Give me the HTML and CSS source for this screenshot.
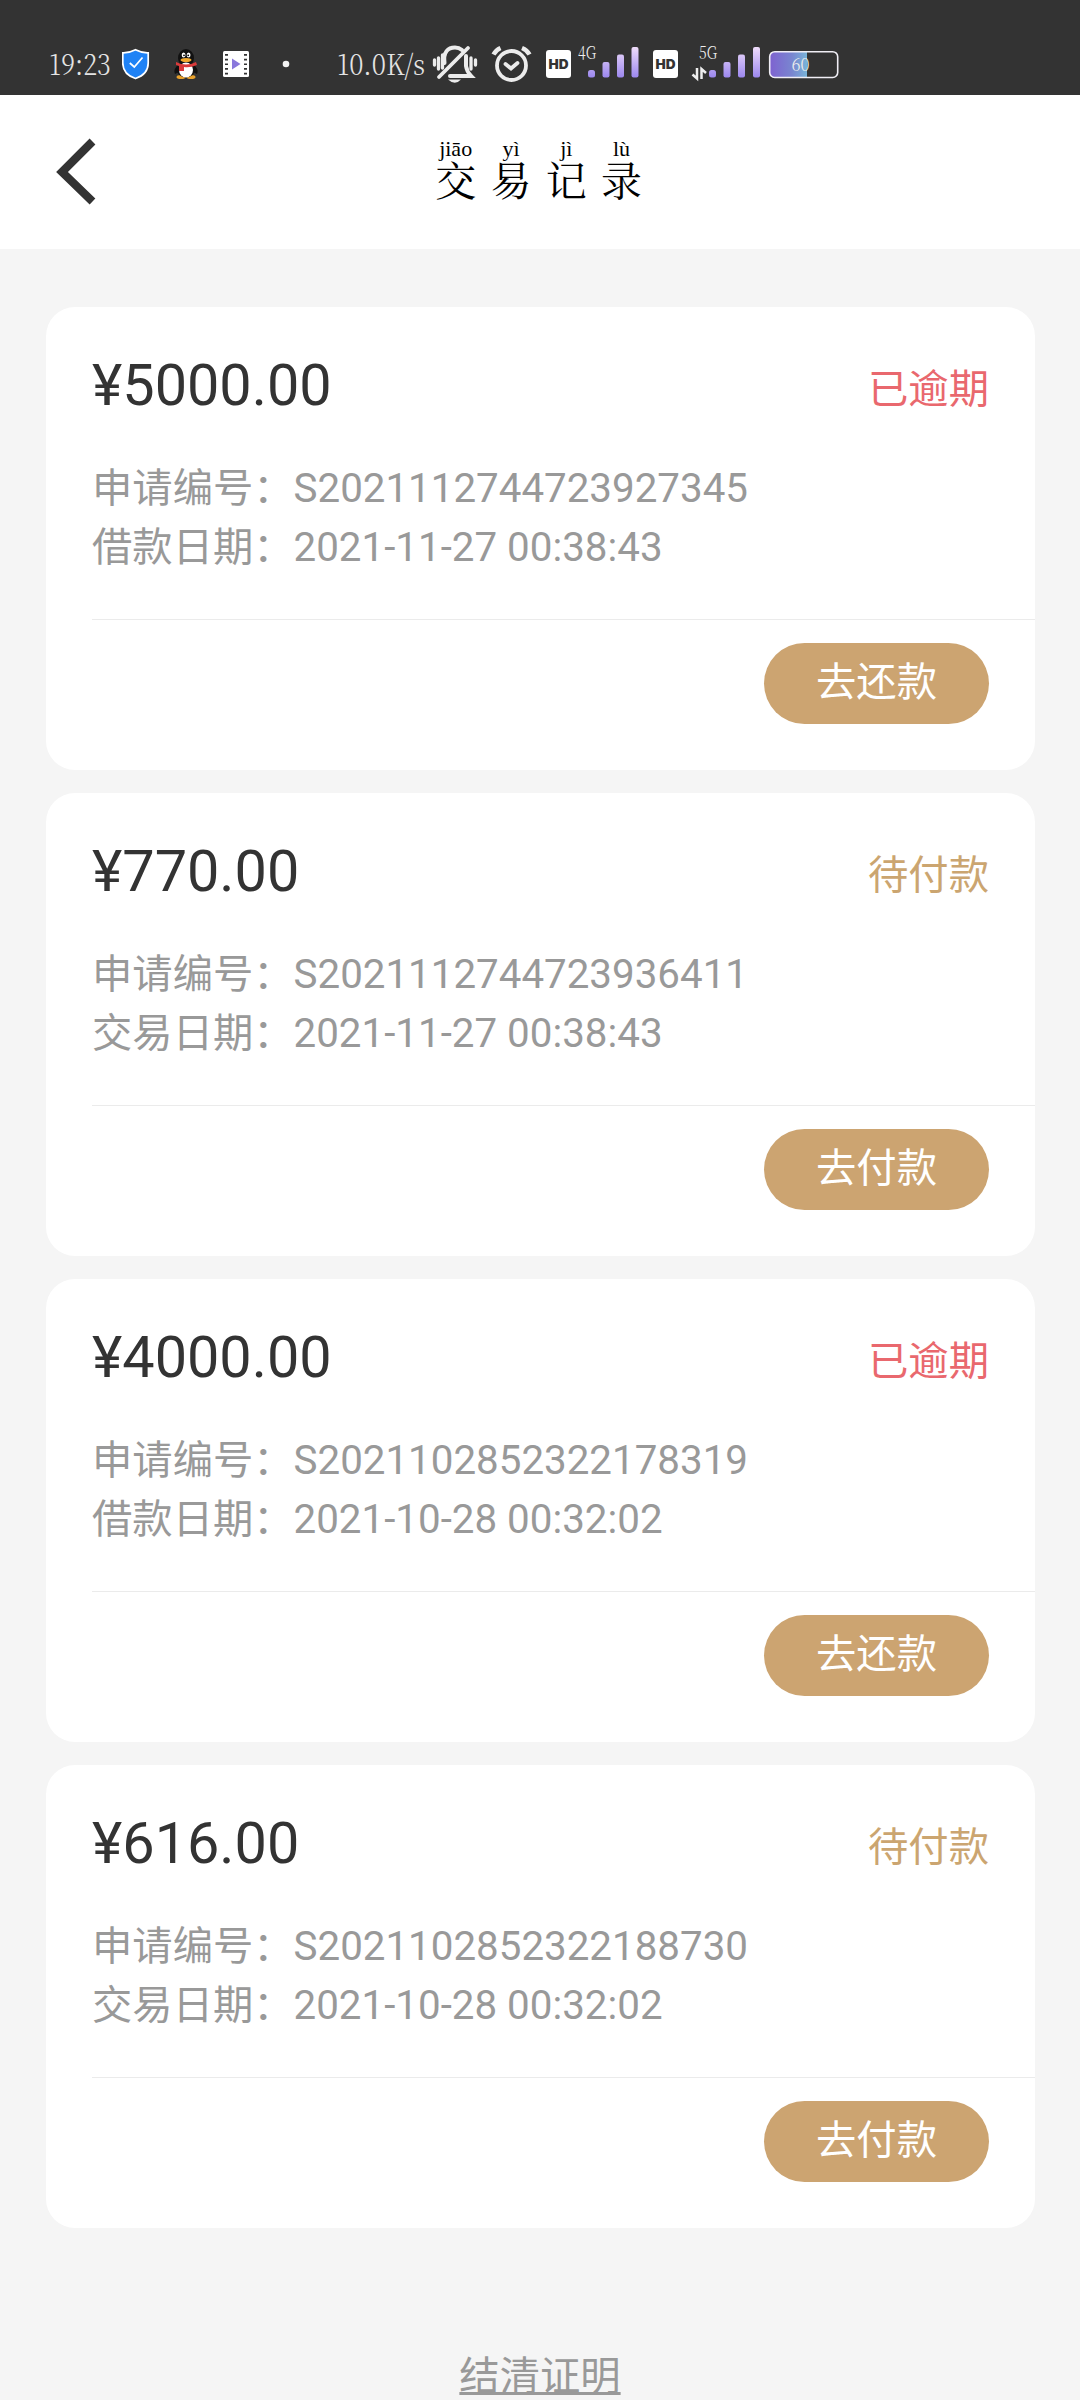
FILE: index.html
```html
<!DOCTYPE html>
<html lang="zh-CN">
<head>
<meta charset="utf-8">
<title>交易记录</title>
<link rel="stylesheet" href="styles.css">
</head>
<body>
<div class="status-bar">
  <svg width="72" height="50" viewBox="50 40 72 50"><text class="status-text" x="49" y="75" textLength="62" lengthAdjust="spacingAndGlyphs">19:23</text></svg>
  <svg width="40" height="50" viewBox="122 40 40 50"><path d="M135.500 49.800Q141.500 53 148.200 52.800V63C148.200 71 143 76 135.500 78.500C128 76 122.800 71 122.800 63V52.800Q129.500 53 135.500 49.800Z" fill="#1f82f5" stroke="#fff" stroke-width="1.700"/><path d="M129.800 63L134.300 67L142.500 57.500" fill="none" stroke="#fff" stroke-width="1.700"/></svg>
  <svg width="50" height="50" viewBox="162 40 50 50"><ellipse cx="181" cy="77" rx="4.500" ry="2" fill="#e9a22c"/><ellipse cx="191" cy="77" rx="4.500" ry="2" fill="#e9a22c"/><path d="M177 66Q173 70 175 74L179 72M195 66Q199 70 197 74L193 72" fill="#111"/><ellipse cx="186" cy="58" rx="8" ry="9" fill="#111"/><ellipse cx="186" cy="69" rx="9.500" ry="8.500" fill="#111"/><ellipse cx="186" cy="70" rx="7" ry="7.500" fill="#fff"/><ellipse cx="183.600" cy="55" rx="1.900" ry="2.600" fill="#fff"/><ellipse cx="188.600" cy="55" rx="1.900" ry="2.600" fill="#fff"/><circle cx="184" cy="55.300" r=".9"/><circle cx="188.200" cy="55.300" r=".9"/><ellipse cx="186" cy="60" rx="5.500" ry="2" fill="#f2a92d"/><path d="M176 62Q186 67 196 62L197 65Q190 68 184 67V71H179V66L176 65Z" fill="#d93a3a"/></svg>
  <svg width="50" height="50" viewBox="212 40 50 50"><rect x="223" y="51" width="26" height="26" rx="1.500" fill="#fff"/><path d="M226.500 54V77M245.500 54V77" stroke="#333" stroke-width="3" stroke-dasharray="1.700 3"/><path d="M232 58.500V69.500L240.500 64Z" fill="#8a78dc"/></svg>
  <svg width="75" height="50" viewBox="262 40 75 50"><circle cx="286" cy="64" r="3.300" fill="#f3f3f3"/></svg>
  <svg width="93" height="50" viewBox="337 40 93 50"><text class="status-text" x="337" y="74.500" textLength="88" lengthAdjust="spacingAndGlyphs">10.0K/s</text></svg>
  <svg width="57" height="50" viewBox="430 40 57 50"><g fill="none" stroke="#ececec" stroke-width="3.300" stroke-linecap="round"><path d="M434.500 60V65M438.500 58V69M475.500 60V65M471 58V69M442.500 55V68"/><path d="M444.500 63C443 52 448 47.500 455 47.500Q459 47.500 462 50M466 56V66Q467 72 471 76H450" stroke-width="4"/><path d="M439 77L468 48" stroke-width="3.800"/></g><path d="M448 79.500H461Q455 86 448 79.500Z" fill="#ececec"/></svg>
  <svg width="53" height="50" viewBox="487 40 53 50"><g fill="none" stroke="#ececec" stroke-linecap="round"><circle cx="511.500" cy="65.500" r="14.500" stroke-width="3.800"/><path d="M505.500 64L511 68.500L517.500 63" stroke-width="3.800"/><path d="M493.500 54.500Q496 50 500.500 48M522 48Q527 50 529.500 54.500" stroke-width="4.500" stroke-linecap="butt"/></g></svg>
  <svg width="35" height="50" viewBox="540 40 35 50"><rect x="546" y="50" width="25" height="28" rx="3" fill="#fff"/><text class="hd" x="548.500" y="69" textLength="20" lengthAdjust="spacingAndGlyphs">HD</text></svg>
  <svg width="73" height="50" viewBox="575 40 73 50"><defs><linearGradient id="bar" x1="0" y1="47" x2="0" y2="78" gradientUnits="userSpaceOnUse"><stop stop-color="#efdcfa"/><stop offset="1" stop-color="#9a86ee"/></linearGradient></defs><text class="net" x="578" y="59" textLength="18" lengthAdjust="spacingAndGlyphs">4G</text><g fill="url(#bar)"><rect x="588" y="70" width="7" height="7.500" rx="2.500"/><rect x="602.500" y="62" width="7" height="15.500" rx="2"/><rect x="617" y="54.500" width="7" height="23" rx="2"/><rect x="631.500" y="47" width="7" height="30.500" rx="2"/></g></svg>
  <svg width="34" height="50" viewBox="648 40 34 50"><rect x="653" y="50" width="25" height="28" rx="3" fill="#fff"/><text class="hd" x="655.500" y="69" textLength="20" lengthAdjust="spacingAndGlyphs">HD</text></svg>
  <svg width="84" height="50" viewBox="682 40 84 50"><text class="net" x="699" y="59" textLength="18" lengthAdjust="spacingAndGlyphs">5G</text><path d="M697 68V78.500L692.500 74.500M701.500 79V69L706 73" fill="none" stroke="#eee" stroke-width="2.500"/><g fill="url(#bar)"><rect x="709" y="70" width="7" height="7.500" rx="2.500"/><rect x="723.500" y="62" width="7" height="15.500" rx="2"/><rect x="738" y="54.500" width="7" height="23" rx="2"/><rect x="753" y="47" width="7" height="30.500" rx="2"/></g></svg>
  <svg width="80" height="50" viewBox="766 40 80 50"><defs><linearGradient id="charge"><stop stop-color="#7e62d0"/><stop offset=".6" stop-color="#7986d0"/><stop offset="1" stop-color="#78b4d8"/></linearGradient></defs><path d="M774 52H807V77.500H774Q770 77.500 770 73V56Q770 52 774 52Z" fill="url(#charge)"/><rect x="769.700" y="51.700" width="68" height="25.800" rx="5" fill="none" stroke="#f0eef5" stroke-width="1.600"/><text class="net" x="791.500" y="71" textLength="18" lengthAdjust="spacingAndGlyphs">60</text></svg>
</div>
<header class="header">
  <svg class="back" width="50" height="80" viewBox="50 131 50 80"><path d="M92.500 141.500L62 172L92.500 201.500" fill="none" stroke="#333" stroke-width="8.200"/></svg>
  <h1 class="title">
    <span class="syllable"><span class="pinyin">jiāo</span><span class="hanzi">交</span></span>
    <span class="syllable"><span class="pinyin">yì</span><span class="hanzi">易</span></span>
    <span class="syllable"><span class="pinyin">jì</span><span class="hanzi">记</span></span>
    <span class="syllable"><span class="pinyin">lù</span><span class="hanzi">录</span></span>
  </h1>
</header>
<main class="list">
  <section class="card">
    <div class="summary"><div class="amount">¥5000.00</div><div class="state overdue">已逾期</div></div>
    <div class="details"><div>申请编号：S2021112744723927345</div><div>借款日期：2021-11-27 00:38:43</div></div>
    <div class="actions"><div class="button">去还款</div></div>
  </section>
  <section class="card">
    <div class="summary"><div class="amount">¥770.00</div><div class="state pending">待付款</div></div>
    <div class="details"><div>申请编号：S2021112744723936411</div><div>交易日期：2021-11-27 00:38:43</div></div>
    <div class="actions"><div class="button">去付款</div></div>
  </section>
  <section class="card">
    <div class="summary"><div class="amount">¥4000.00</div><div class="state overdue">已逾期</div></div>
    <div class="details"><div>申请编号：S2021102852322178319</div><div>借款日期：2021-10-28 00:32:02</div></div>
    <div class="actions"><div class="button">去还款</div></div>
  </section>
  <section class="card">
    <div class="summary"><div class="amount">¥616.00</div><div class="state pending">待付款</div></div>
    <div class="details"><div>申请编号：S2021102852322188730</div><div>交易日期：2021-10-28 00:32:02</div></div>
    <div class="actions"><div class="button">去付款</div></div>
  </section>
</main>
<footer class="footer"><span class="proof">结清证明</span></footer>
</body>
</html>
```
FILE: styles.css
```css
* { box-sizing: border-box; }
body {
  margin: 0;
  height: 2400px;
  overflow: hidden;
  background: #f5f5f5;
  font-family: Roboto, "Noto Sans CJK SC", sans-serif;
}
.status-bar {
  display: flex;
  height: 95px;
  padding: 40px 0 0 50px;
  background: #333;
}
.status-bar svg { flex: none; display: block; }
.status-text { font: 300 29px "Noto Serif CJK SC", "Liberation Serif", serif; fill: #e4e4e4; }
.net { font: 300 17.500px "Noto Serif CJK SC", "Liberation Serif", serif; fill: #eee; }
.hd { font: 900 13px Inter, sans-serif; fill: #333; }
.header {
  display: flex;
  align-items: flex-start;
  height: 154px;
  padding: 36px 0 0 50px;
  background: #fff;
}
.back { display: block; }
.title {
  display: flex;
  margin: 8px 0 0 328px;
  font-weight: 400;
  color: #000;
}
.syllable {
  display: flex;
  flex-direction: column;
  align-items: center;
  width: 55.300px;
}
.pinyin { font: 22px/20px "Liberation Serif", serif; }
.hanzi { font: 400 41px/40px "Noto Serif CJK SC", "Noto Sans CJK SC", sans-serif; }
.list {
  display: flex;
  flex-direction: column;
  gap: 23px;
  padding: 58px 45px 0 46px;
}
.card {
  display: flex;
  flex-direction: column;
  height: 463px;
  padding-left: 46px;
  border-radius: 29px;
  background: #fff;
}
.summary {
  display: flex;
  justify-content: space-between;
  height: 152px;
  padding: 45px 46px 0 0;
}
.amount { font-size: 57.600px; line-height: 68px; color: #333; }
.state { padding-top: 8px; font-size: 40.320px; line-height: 59px; }
.overdue { color: #e9686e; }
.pending { color: #cba570; }
.details {
  height: 160px;
  font-size: 40.320px;
  line-height: 59px;
  color: #999;
}
.actions {
  display: flex;
  justify-content: flex-end;
  padding: 23px 46px 0 0;
  border-top: 1px solid #ebebeb;
}
.button {
  width: 225px;
  height: 81px;
  border-radius: 41px;
  background: #cca471;
  color: #fff;
  font-size: 40.320px;
  line-height: 79px;
  text-align: center;
}
.footer {
  display: flex;
  justify-content: center;
  padding-top: 120px;
}
.proof {
  font-size: 40.320px;
  line-height: 58px;
  color: #999;
  text-decoration: underline;
  text-decoration-thickness: 3px;
}
```
